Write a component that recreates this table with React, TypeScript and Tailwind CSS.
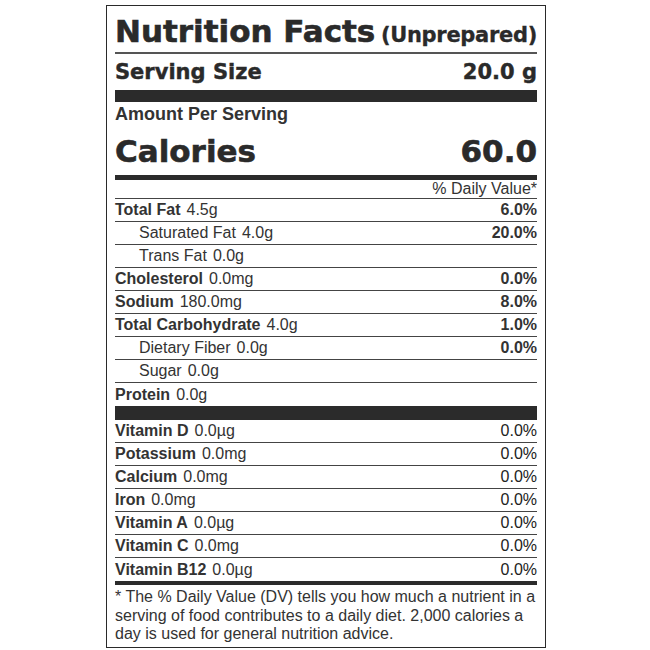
import React from "react";

type Row = {
  label: string;
  value: string;
  dv?: string;
  indent?: boolean;
  border?: boolean;
  dvBold?: boolean;
};

const macro: Row[] = [
  { label: "Total Fat", value: "4.5g", dv: "6.0%", border: true, dvBold: true },
  { label: "Saturated Fat", value: "4.0g", dv: "20.0%", indent: true, border: true, dvBold: true },
  { label: "Trans Fat", value: "0.0g", indent: true, border: true },
  { label: "Cholesterol", value: "0.0mg", dv: "0.0%", border: true, dvBold: true },
  { label: "Sodium", value: "180.0mg", dv: "8.0%", border: true, dvBold: true },
  { label: "Total Carbohydrate", value: "4.0g", dv: "1.0%", border: true, dvBold: true },
  { label: "Dietary Fiber", value: "0.0g", dv: "0.0%", indent: true, border: true, dvBold: true },
  { label: "Sugar", value: "0.0g", indent: true, border: true },
  { label: "Protein", value: "0.0g", border: false },
];

const micro: Row[] = [
  { label: "Vitamin D", value: "0.0µg", dv: "0.0%", border: true },
  { label: "Potassium", value: "0.0mg", dv: "0.0%", border: true },
  { label: "Calcium", value: "0.0mg", dv: "0.0%", border: true },
  { label: "Iron", value: "0.0mg", dv: "0.0%", border: true },
  { label: "Vitamin A", value: "0.0µg", dv: "0.0%", border: true },
  { label: "Vitamin C", value: "0.0mg", dv: "0.0%", border: true },
  { label: "Vitamin B12", value: "0.0µg", dv: "0.0%", border: false },
];

function NRow({ r }: { r: Row }) {
  return (
    <div
      className={
        "h-[23px] flex items-center justify-between text-[16px] leading-[16px] " +
        (r.border ? "border-b border-[#444]" : "")
      }
    >
      <div className={r.indent ? "pl-[24px] flex" : "flex"}>
        <span className={r.indent ? "font-normal" : "font-bold"}>{r.label}</span>
        <span className="ml-[6px] font-normal">{r.value}</span>
      </div>
      {r.dv ? (
        <span className={r.dvBold ? "font-bold" : "font-normal text-[#222]"}>{r.dv}</span>
      ) : null}
    </div>
  );
}

export default function App() {
  return (
    <div className="w-[650px] h-[650px] bg-white pt-[5px] pl-[106px] font-['Liberation_Sans',Arial,sans-serif] text-[#333]">
      <div className="w-[440px] h-[643px] border border-[#2a2a2a] px-[8px] flex flex-col">
        <div className="h-[48px] pt-[10px] flex items-baseline justify-between border-b-[2px] border-[#555] font-['DejaVu_Sans',sans-serif] font-bold text-[#2a2a2a] [-webkit-text-stroke:0.6px_#2a2a2a]">
          <span className="text-[31px] leading-[31px]">Nutrition Facts</span>
          <span className="text-[21px] leading-[21px] tracking-[-0.3px] [-webkit-text-stroke:0.3px_#2a2a2a]">(Unprepared)</span>
        </div>
        <div className="h-[36px] pt-[8px] flex items-baseline justify-between font-['DejaVu_Sans',sans-serif] font-bold text-[#2a2a2a] text-[21px] leading-[20px] [-webkit-text-stroke:0.4px_#2a2a2a]">
          <span>Serving Size</span>
          <span>20.0 g</span>
        </div>
        <div className="h-[12px] bg-[#2b2b2b]" />
        <div className="h-[22px] pt-[3px] text-[18px] leading-[18px] font-bold">Amount Per Serving</div>
        <div className="h-[51px] pt-[12px] flex items-baseline justify-between font-['DejaVu_Sans',sans-serif] font-bold text-[#2a2a2a] text-[31px] leading-[31px] [-webkit-text-stroke:0.6px_#2a2a2a]">
          <span>Calories</span>
          <span>60.0</span>
        </div>
        <div className="h-[5px] bg-[#2b2b2b]" />
        <div className="h-[19px] flex items-center justify-end border-b border-[#444] text-[16px] leading-[16px]">
          % Daily Value*
        </div>
        {macro.map((r) => (
          <NRow key={r.label} r={r} />
        ))}
        <div className="h-[14px] bg-[#2b2b2b]" />
        {micro.map((r) => (
          <NRow key={r.label} r={r} />
        ))}
        <div className="h-[4px] bg-[#2b2b2b]" />
        <p className="pt-[3px] text-[16px] leading-[18.5px]">
          * The % Daily Value (DV) tells you how much a nutrient in a serving of food contributes to a daily diet. 2,000 calories a day is used for general nutrition advice.
        </p>
      </div>
    </div>
  );
}
